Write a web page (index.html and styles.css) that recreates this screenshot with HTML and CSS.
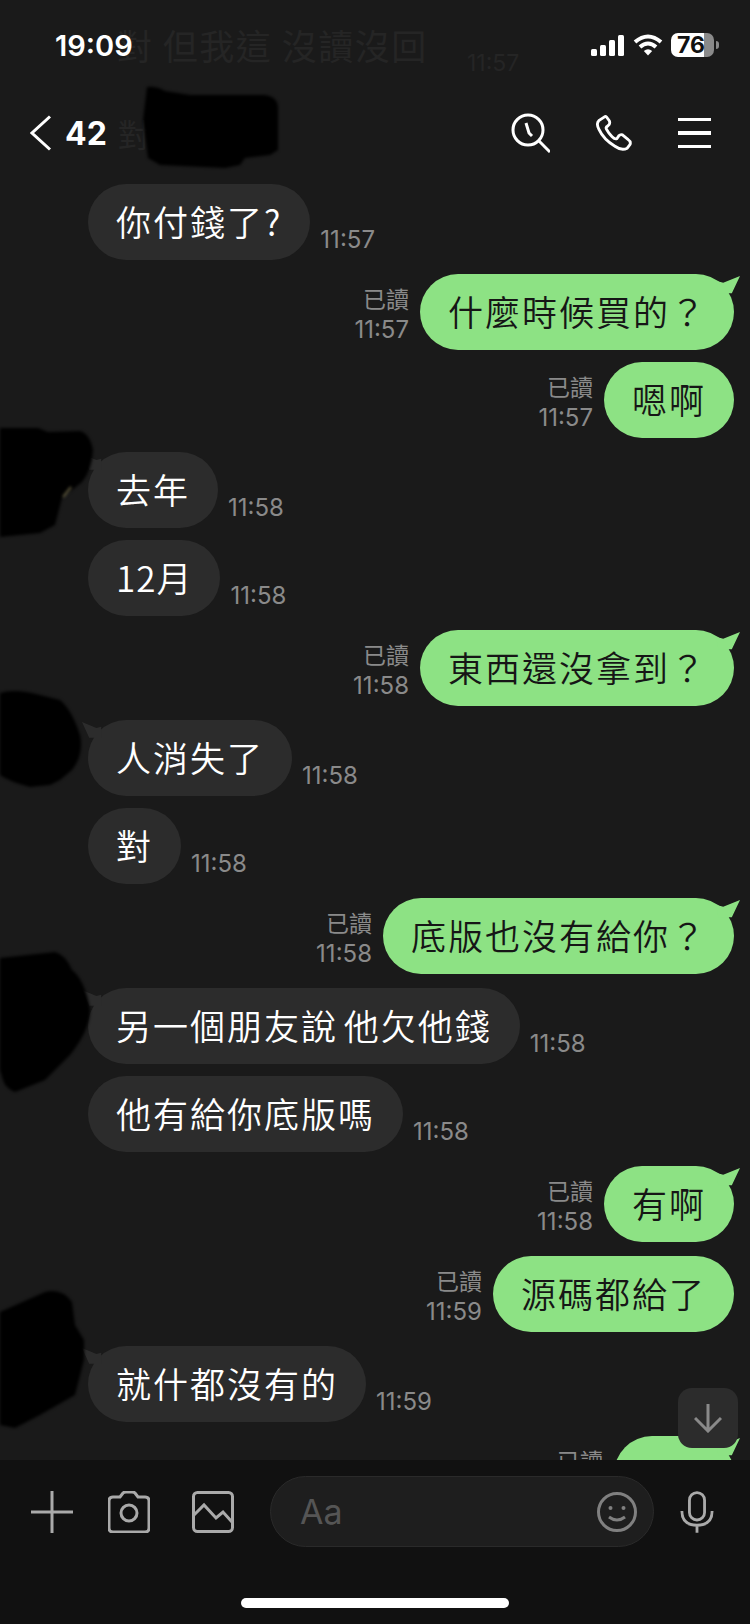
FILE: index.html
```html
<!DOCTYPE html>
<html lang="zh-Hant">

<head>
    <meta charset="UTF-8">
    <meta name="viewport" content="width=device-width, initial-scale=1.0">
    <title>聊天室</title>
    <link rel="stylesheet" href="styles.css">
</head>

<body>
    <div class="phone">
        <!-- Barra superior -->
        <div class="topbar">
            <div class="ghost-msg">對 但我這 沒讀沒回</div>
            <div class="ghost-time">11:57</div>
            <div class="status">
                <span class="clock">19:09</span>
                <div class="status-icons">
                    <svg class="signal" viewBox="0 0 33 21" width="33" height="21">
                        <rect x="0" y="14" width="6" height="7" rx="1.5" />
                        <rect x="9" y="10" width="6" height="11" rx="1.5" />
                        <rect x="18" y="5" width="6" height="16" rx="1.5" />
                        <rect x="27" y="0" width="6" height="21" rx="1.5" />
                    </svg>
                    <svg class="wifi" viewBox="0 0 30 22" width="30" height="22">
                        <path d="M2 8 Q15 -3 28 8" />
                        <path d="M7 13 Q15 6 23 13" />
                        <path class="wifi-dot" d="M15 21.5 L10.8 17 Q15 13.5 19.2 17 Z" />
                    </svg>
                    <div class="battery"><span>76</span></div>
                    <div class="battery-cap"></div>
                </div>
            </div>
            <div class="nav">
                <div class="nav-left">
                    <svg viewBox="0 0 22 36" width="22" height="36" class="icon-white">
                        <path d="M20 1.5 L2 18 L20 34.5" />
                    </svg>
                    <span class="unread">42</span>
                    <span class="ghost-name">對</span>
                </div>
                <div class="nav-right">
                    <svg viewBox="0 0 40 40" width="40" height="40" class="icon-white">
                        <circle cx="18" cy="17" r="15" />
                        <path d="M29 28 L40 39" />
                        <path d="M16 10 L19 20 L22 23" />
                    </svg>
                    <svg viewBox="0 0 38 38" width="36" height="36" class="icon-white">
                        <path d="M9 2 L3 6 Q0 9 3 15 Q8 26 20 33 Q27 38 33 35 L36 31 Q37 28 34 26 L28 21 Q26 20 24 22 L22 25 Q20 26 17 23 Q13 19 11 15 Q10 13 12 12 L14 10 Q15 8 14 6 L11 2 Q10 1 9 2 Z" />
                    </svg>
                    <div class="hamburger"><i></i><i></i><i></i></div>
                </div>
            </div>
        </div>

        <!-- Mensagens -->
        <div class="chat">
            <div class="msg in first"><div class="bubble">你付錢了?</div><div class="time">11:57</div></div>

            <div class="msg out tail"><div class="meta"><div class="read">已讀</div>11:57</div><div class="bubble bubble-q">什麼時候買的？</div></div>
            <div class="msg out same"><div class="meta"><div class="read">已讀</div>11:57</div><div class="bubble">嗯啊</div></div>

            <div class="msg in tail"><div class="bubble">去年</div><div class="time">11:58</div></div>
            <div class="msg in same"><div class="bubble bubble-num">12月</div><div class="time">11:58</div></div>

            <div class="msg out tail"><div class="meta"><div class="read">已讀</div>11:58</div><div class="bubble bubble-q">東西還沒拿到？</div></div>

            <div class="msg in tail"><div class="bubble">人消失了</div><div class="time">11:58</div></div>
            <div class="msg in same"><div class="bubble">對</div><div class="time">11:58</div></div>

            <div class="msg out tail"><div class="meta"><div class="read">已讀</div>11:58</div><div class="bubble bubble-q">底版也沒有給你？</div></div>

            <div class="msg in tail"><div class="bubble">另一個朋友說 他欠他錢</div><div class="time">11:58</div></div>
            <div class="msg in same"><div class="bubble">他有給你底版嗎</div><div class="time">11:58</div></div>

            <div class="msg out tail"><div class="meta"><div class="read">已讀</div>11:58</div><div class="bubble">有啊</div></div>
            <div class="msg out"><div class="meta"><div class="read">已讀</div>11:59</div><div class="bubble">源碼都給了</div></div>

            <div class="msg in tail"><div class="bubble">就什都沒有的</div><div class="time">11:59</div></div>

            <div class="msg out tail"><div class="meta"><div class="read">已讀</div>11:59</div><div class="bubble bubble-cut"></div></div>
        </div>

        <button class="scroll-down">
            <svg viewBox="0 0 28 30" width="28" height="30">
                <path d="M14 1 L14 28 M1 15 L14 28 L27 15" />
            </svg>
        </button>

        <!-- Barra de digitar -->
        <div class="footer">
            <div class="composer">
                <svg viewBox="0 0 42 42" width="42" height="42" class="icon-gray">
                    <path d="M21 0 V42 M0 21 H42" />
                </svg>
                <svg viewBox="0 0 42 42" width="42" height="42" class="icon-gray">
                    <path d="M5 6 H12 L15 2 Q16 1 18 1 H24 Q26 1 27 2 L30 6 H37 Q41 6 41 10 V37 Q41 41 37 41 H5 Q1 41 1 37 V10 Q1 6 5 6 Z" />
                    <circle cx="21" cy="22" r="8" />
                </svg>
                <svg viewBox="0 0 42 42" width="42" height="42" class="icon-gray icon-photo">
                    <rect x="1.5" y="1.5" width="39" height="39" rx="4" />
                    <path d="M2 24 L12 14 L24 27 L31 21 L40 31" />
                </svg>
                <div class="input">
                    <span class="placeholder">Aa</span>
                    <svg viewBox="0 0 40 40" width="40" height="40" class="smile">
                        <circle cx="20" cy="20" r="18.5" />
                        <circle class="eye" cx="13.5" cy="16" r="2" />
                        <circle class="eye" cx="26.5" cy="16" r="2" />
                        <path d="M12 25 Q20 31 28 25" />
                    </svg>
                </div>
                <svg viewBox="0 0 36 44" width="34" height="44" class="icon-gray mic">
                    <rect x="10" y="1.5" width="16" height="29" rx="8" />
                    <path d="M2 21 Q2 36 18 36 Q34 36 34 21 M18 36 V44" />
                </svg>
            </div>
            <div class="home-bar"></div>
        </div>

        <!-- Partes censuradas -->
        <svg class="scribbles" viewBox="0 0 750 1624" width="750" height="1624">
            <path d="M147 87 Q156 86 165 91 L190 95 L265 95 Q278 97 278 108 L278 150 L270 155 L245 158 L240 165 L225 168 L160 165 L148 158 L143 120 Z" />
            <path d="M0 428 L38 428 L48 432 L80 431 Q90 434 93 450 Q92 470 82 482 L62 498 L55 525 L40 533 L0 537 Z" />
            <path d="M0 693 Q15 688 40 695 L60 700 Q72 710 80 735 Q84 755 72 770 L60 780 L50 785 L30 787 Q10 782 0 775 Z" />
            <path d="M0 958 L55 952 Q66 955 72 970 Q85 980 90 1010 Q90 1030 70 1055 L45 1080 L15 1092 Q5 1088 3 1080 L0 1070 Z" />
            <path d="M0 1312 L45 1292 Q62 1288 72 1302 L75 1325 L84 1340 L84 1360 L75 1395 L40 1415 L15 1428 L0 1425 Z" />
            <path class="speck" d="M63 497 L71 487" />
        </svg>
    </div>
</body>

</html>
```

FILE: styles.css
```css
* {
    padding: 0;
    margin: 0;
    box-sizing: border-box;
}

body {
    background: #1a1a1a;
    font-family: "Noto Sans CJK TC", sans-serif;
}

.phone {
    width: 750px;
    height: 1624px;
    background: #1a1a1a;
    position: relative;
    overflow: hidden;
    display: flex;
    flex-direction: column;
}

/* Barra superior */
.topbar {
    height: 184px;
    flex-shrink: 0;
    position: relative;
}

.ghost-msg {
    position: absolute;
    left: 117px;
    top: 19px;
    font-size: 35px;
    letter-spacing: 1.5px;
    color: #252525;
    white-space: nowrap;
}

.ghost-time {
    position: absolute;
    left: 467px;
    top: 49px;
    font-family: "Inter", sans-serif;
    font-size: 23px;
    color: #252525;
}

.status {
    height: 90px;
    padding: 0 31px 0 55px;
    display: flex;
    justify-content: space-between;
    align-items: center;
    position: relative;
}

.clock {
    font-family: "Inter", sans-serif;
    font-weight: 600;
    font-size: 29px;
    color: #fff;
}

.status-icons {
    display: flex;
    align-items: center;
}

.signal {
    fill: #fff;
    margin-right: 9px;
}

.wifi {
    margin-right: 8px;
}

.wifi path {
    fill: none;
    stroke: #fff;
    stroke-width: 4;
}

.wifi .wifi-dot {
    fill: #fff;
    stroke: none;
}

.battery {
    width: 43px;
    height: 24px;
    border-radius: 7px;
    background: linear-gradient(to right, #fff 76%, #8a8a8a 76%);
    color: #111;
    font-family: "Inter", sans-serif;
    font-weight: 700;
    font-size: 23px;
    line-height: 24px;
    padding-left: 6px;
}

.battery-cap {
    width: 3px;
    height: 8px;
    margin-left: 2px;
    background: #8a8a8a;
    border-radius: 0 3px 3px 0;
}

.nav {
    height: 86px;
    padding: 0 39px 0 30px;
    display: flex;
    justify-content: space-between;
    align-items: center;
    position: relative;
}

.nav-left {
    display: flex;
    align-items: center;
}

.unread {
    font-family: "Inter", sans-serif;
    font-weight: 700;
    font-size: 32px;
    color: #fff;
    margin-left: 13px;
}

.ghost-name {
    font-size: 32px;
    color: #252525;
    margin-left: 11px;
}

.nav-right {
    display: flex;
    align-items: center;
    gap: 46px;
}

.icon-white {
    fill: none;
    stroke: #fff;
    stroke-width: 3;
}

.hamburger {
    width: 33px;
    display: flex;
    flex-direction: column;
    gap: 10px;
}

.hamburger i {
    display: block;
    height: 3.5px;
    background: #fff;
}

/* Mensagens */
.chat {
    flex: 1;
    overflow: hidden;
    display: flex;
    flex-direction: column;
}

.msg {
    display: flex;
    flex-shrink: 0;
    align-items: flex-end;
    margin-top: 14px;
}

.msg.first {
    margin-top: 0;
}

.msg.same {
    margin-top: 12px;
}

.msg.in {
    padding-left: 88px;
    gap: 10px;
}

.msg.out {
    padding-right: 16px;
    justify-content: flex-end;
    gap: 11px;
}

.bubble {
    height: 76px;
    padding: 0 28px;
    border-radius: 38px;
    font-size: 35px;
    font-weight: 350;
    letter-spacing: 2px;
    word-spacing: -4px;
    line-height: 74px;
    white-space: nowrap;
    position: relative;
}

/* O ponto de interrogação largo ocupa menos espaço no original */
.bubble-q {
    padding-right: 27px;
}

.bubble-num {
    letter-spacing: 1px;
}

.bubble-cut {
    width: 120px;
}

.msg.in .bubble {
    background: #2c2c2c;
    color: #fff;
}

.msg.out .bubble {
    background: #8de284;
    color: #161616;
}

/* Rabinho do balão */
.msg.tail .bubble::after {
    content: "";
    position: absolute;
    width: 24px;
    height: 24px;
    top: 2px;
}

.msg.out.tail .bubble::after {
    right: -6px;
    background: #8de284;
    clip-path: polygon(0 20%, 30% 28%, 100% 0, 66% 72%, 10% 72%);
}

.msg.in.tail .bubble::after {
    left: -6px;
    background: #2c2c2c;
    clip-path: polygon(80% 20%, 60% 25%, 0 0, 30% 66%, 80% 66%);
}

.time,
.meta {
    font-family: "Inter", "Noto Sans CJK TC", sans-serif;
    font-size: 24px;
    color: #8a8a8a;
    padding-bottom: 6px;
}

.meta {
    text-align: right;
    line-height: 29px;
    padding-bottom: 6px;
}

.read {
    font-size: 23px;
}

/* Botão de descer */
.scroll-down {
    position: absolute;
    left: 678px;
    top: 1388px;
    width: 60px;
    height: 60px;
    border: none;
    border-radius: 14px;
    background: #2c2c2c;
    display: flex;
    align-items: center;
    justify-content: center;
}

.scroll-down path {
    fill: none;
    stroke: #8a8a8a;
    stroke-width: 3;
}

/* Barra de digitar */
.footer {
    height: 164px;
    flex-shrink: 0;
    background: #111;
    padding-top: 16px;
    display: flex;
    flex-direction: column;
    position: relative;
}

.composer {
    height: 71px;
    padding-left: 31px;
    display: flex;
    align-items: center;
    gap: 35px;
}

.icon-gray {
    fill: none;
    stroke: #aaa;
    stroke-width: 3;
    flex-shrink: 0;
}

.icon-photo {
    margin-left: 7px;
}

.input {
    width: 384px;
    height: 71px;
    margin-left: 1px;
    background: #1e1e1e;
    border: 1px solid #2a2a2a;
    border-radius: 36px;
    padding: 0 16px 0 29px;
    display: flex;
    align-items: center;
    justify-content: space-between;
}

.placeholder {
    font-family: "Inter", sans-serif;
    font-size: 34px;
    color: #555;
}

.smile {
    fill: none;
    stroke: #808080;
    stroke-width: 3;
}

.smile .eye {
    fill: #808080;
    stroke: none;
}

.mic {
    margin-left: -9px;
}

.home-bar {
    width: 268px;
    height: 10px;
    margin: 51px auto 0;
    background: #fff;
    border-radius: 5px;
}

/* Partes censuradas */
.scribbles {
    position: absolute;
    left: 0;
    top: 0;
    fill: #000;
    filter: blur(1.5px);
    pointer-events: none;
}

.scribbles .speck {
    fill: none;
    stroke: #6b6445;
    stroke-width: 2;
}
```
